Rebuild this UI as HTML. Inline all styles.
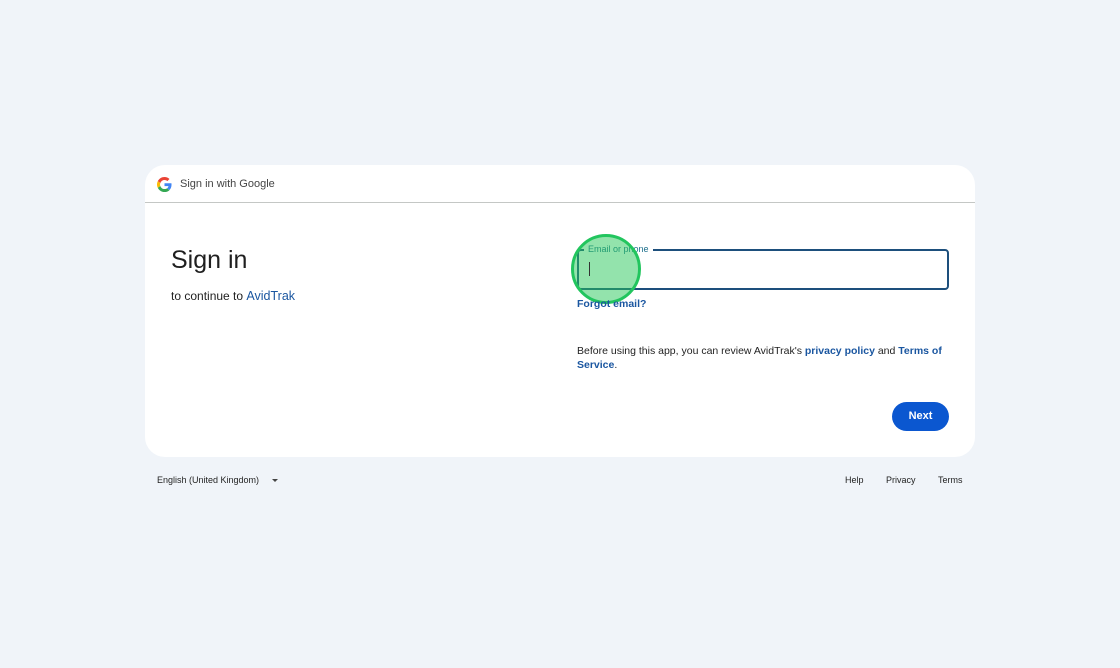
<!DOCTYPE html>
<html><head><style>
body{margin:0;width:1120px;height:668px;background:#f0f4f9;font-family:"Liberation Sans",sans-serif;position:relative;overflow:hidden}
.card{position:absolute;left:145px;top:165px;width:830px;height:292px;background:#fff;border-radius:20px}
.hdr{height:37px;border-bottom:1px solid #c4c7c5;position:relative}
.hdr span{position:absolute;left:35px;top:13px;font-size:11px;color:#444}
.a{position:absolute}
a{color:#1a56a0;text-decoration:none;font-weight:bold}
</style></head><body>
<div class="card">
<div class="hdr">
<svg class="a" style="left:12px;top:12px" width="15" height="15" viewBox="0 0 48 48"><path fill="#EA4335" d="M24 9.5c3.5 0 6.6 1.2 9.1 3.6l6.8-6.8C35.8 2.4 30.2 0 24 0 14.6 0 6.6 5.4 2.7 13.3l7.9 6.1C12.5 13.6 17.8 9.5 24 9.5z"/><path fill="#4285F4" d="M46.5 24.5c0-1.6-.1-3.1-.4-4.5H24v9h12.7c-.6 2.9-2.2 5.4-4.7 7.1l7.7 6c4.5-4.2 6.8-10.4 6.8-17.6z"/><path fill="#FBBC05" d="M10.5 28.6c-.5-1.4-.8-3-.8-4.6s.3-3.2.8-4.6l-7.9-6.1C1 16.6 0 20.2 0 24s.9 7.4 2.6 10.7l7.9-6.1z"/><path fill="#34A853" d="M24 48c6.5 0 11.9-2.1 15.9-5.8l-7.7-6c-2.2 1.5-5 2.3-8.2 2.3-6.2 0-11.5-4.2-13.4-9.9l-7.9 6.1C6.6 42.6 14.6 48 24 48z"/></svg>
<span>Sign in with Google</span></div>
<div class="a" style="left:26px;top:81px;font-size:25px;color:#1f1f1f">Sign in</div>
<div class="a" style="left:26px;top:124px;font-size:12px;color:#1f1f1f">to continue to <a style="font-weight:normal;font-size:12.5px">AvidTrak</a></div>
<div class="a" style="left:432px;top:84px;width:368px;height:37px;border:2px solid #1d4f7c;border-radius:4px"></div>
<div class="a" style="left:439px;top:79px;font-size:9px;color:#1d6f8c;background:#fff;padding:0 4px">Email or phone</div>
<div class="a" style="left:426px;top:69px;border-radius:50%;background:rgba(40,200,90,.5);border:3px solid #22c55e;box-sizing:border-box;width:70px;height:70px"></div>
<div class="a" style="left:444px;top:97px;width:1px;height:14px;background:#333"></div>
<a class="a" style="left:432px;top:133px;font-size:10.5px">Forgot email?</a>
<div class="a" style="left:432px;top:179px;width:370px;font-size:10.5px;line-height:14px;color:#1f1f1f">Before using this app, you can review AvidTrak's <a>privacy policy</a> and <a>Terms of Service</a>.</div>
<div class="a" style="left:747px;top:237px;width:57px;height:29px;border-radius:15px;background:#0b57d0;color:#fff;font-size:11px;font-weight:bold;text-align:center;line-height:29px">Next</div>
</div>
<div class="a" style="left:157px;top:475px;font-size:9px;color:#1f1f1f">English (United Kingdom)</div>
<div class="a" style="left:272px;top:479px;border:3px solid transparent;border-top:3px solid #444"></div>
<div class="a" style="left:845px;top:475px;font-size:9px;color:#1f1f1f">Help</div>
<div class="a" style="left:886px;top:475px;font-size:9px;color:#1f1f1f">Privacy</div>
<div class="a" style="left:938px;top:475px;font-size:9px;color:#1f1f1f">Terms</div>
</body></html>
